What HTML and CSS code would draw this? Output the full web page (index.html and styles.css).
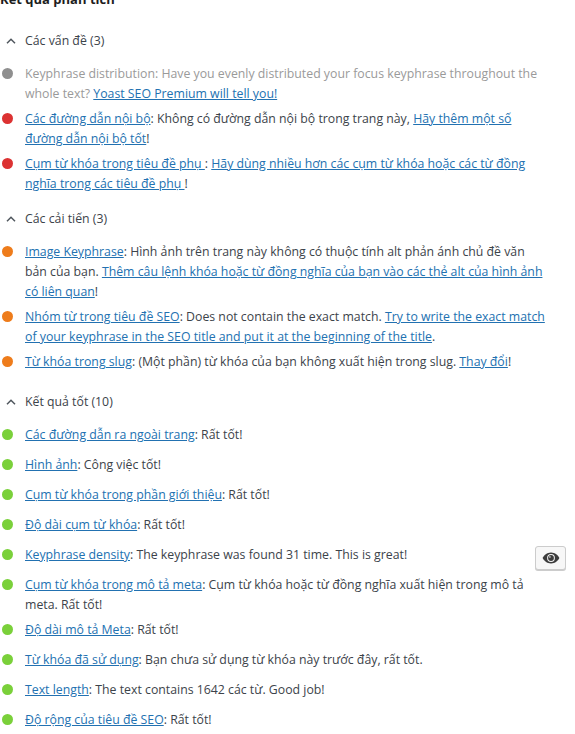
FILE: index.html
```html
<!DOCTYPE html>
<html lang="vi">
<head>
<meta charset="utf-8">
<title>Kết quả phân tích</title>
<link rel="stylesheet" href="styles.css">
</head>
<body>
<div class="panel">
  <h2 class="title">Kết quả phân tích</h2>

  <section class="group">
    <div class="group-head">
      <svg class="chev" width="10" height="6" viewBox="0 0 10 6"><polyline points="1,5.2 5,1.2 9,5.2" fill="none" stroke="#50575e" stroke-width="1.5"/></svg>
      <span>Các vấn đề (3)</span>
    </div>
    <ul class="results">
      <li class="result"><span class="bullet gray"></span><p class="text"><span class="muted">Keyphrase distribution: Have you evenly distributed your focus keyphrase throughout the whole text? </span><a href="#">Yoast SEO Premium will tell you!</a></p></li>
      <li class="result"><span class="bullet red"></span><p class="text"><a href="#">Các đường dẫn nội bộ</a>: Không có đường dẫn nội bộ trong trang này, <a href="#">Hãy thêm một số đường dẫn nội bộ tốt</a>!</p></li>
      <li class="result"><span class="bullet red"></span><p class="text"><a href="#">Cụm từ khóa trong tiêu đề phụ </a>: <a href="#">Hãy dùng nhiều hơn các cụm từ khóa hoặc các từ đồng nghĩa trong các tiêu đề phụ </a>!</p></li>
    </ul>
  </section>

  <section class="group">
    <div class="group-head">
      <svg class="chev" width="10" height="6" viewBox="0 0 10 6"><polyline points="1,5.2 5,1.2 9,5.2" fill="none" stroke="#50575e" stroke-width="1.5"/></svg>
      <span>Các cải tiến (3)</span>
    </div>
    <ul class="results">
      <li class="result"><span class="bullet orange"></span><p class="text"><a href="#">Image Keyphrase</a>: Hình ảnh trên trang này không có thuộc tính alt phản ánh chủ đề văn bản của bạn. <a href="#">Thêm câu lệnh khóa hoặc từ đồng nghĩa của bạn vào các thẻ alt của hình ảnh có liên quan</a>!</p></li>
      <li class="result"><span class="bullet orange"></span><p class="text"><a href="#">Nhóm từ trong tiêu đề SEO</a>: Does not contain the exact match. <a href="#">Try to write the exact match of your keyphrase in the SEO title and put it at the beginning of the title</a>.</p></li>
      <li class="result"><span class="bullet orange"></span><p class="text"><a href="#">Từ khóa trong slug</a>: (Một phần) từ khóa của bạn không xuất hiện trong slug. <a href="#">Thay đổi</a>!</p></li>
    </ul>
  </section>

  <section class="group">
    <div class="group-head">
      <svg class="chev" width="10" height="6" viewBox="0 0 10 6"><polyline points="1,5.2 5,1.2 9,5.2" fill="none" stroke="#50575e" stroke-width="1.5"/></svg>
      <span>Kết quả tốt (10)</span>
    </div>
    <ul class="results">
      <li class="result"><span class="bullet green"></span><p class="text"><a href="#">Các đường dẫn ra ngoài trang</a>: Rất tốt!</p></li>
      <li class="result"><span class="bullet green"></span><p class="text"><a href="#">Hình ảnh</a>: Công việc tốt!</p></li>
      <li class="result"><span class="bullet green"></span><p class="text"><a href="#">Cụm từ khóa trong phần giới thiệu</a>: Rất tốt!</p></li>
      <li class="result"><span class="bullet green"></span><p class="text"><a href="#">Độ dài cụm từ khóa</a>: Rất tốt!</p></li>
      <li class="result"><span class="bullet green"></span><p class="text"><a href="#">Keyphrase density</a>: The keyphrase was found 31 time. This is great!</p>
        <button class="eye-btn" type="button" aria-label="Highlight">
          <svg width="18" height="12" viewBox="0 0 18 12"><path d="M9 0.6C4.9 0.6 1.9 3.4 0.6 6c1.3 2.6 4.3 5.4 8.4 5.4s7.1-2.8 8.4-5.4C16.1 3.4 13.1 0.6 9 0.6z" fill="#3c3c3c"/><circle cx="9" cy="6" r="3.9" fill="#f7f7f7"/><circle cx="9" cy="6" r="2.9" fill="#3c3c3c"/><circle cx="7.9" cy="4.9" r="0.9" fill="#bbb"/></svg>
        </button>
      </li>
      <li class="result"><span class="bullet green"></span><p class="text"><a href="#">Cụm từ khóa trong mô tả meta</a>: Cụm từ khóa hoặc từ đồng nghĩa xuất hiện trong mô tả meta. Rất tốt!</p></li>
      <li class="result"><span class="bullet green"></span><p class="text"><a href="#">Độ dài mô tả Meta</a>: Rất tốt!</p></li>
      <li class="result"><span class="bullet green"></span><p class="text"><a href="#">Từ khóa đã sử dụng</a>: Bạn chưa sử dụng từ khóa này trước đây, rất tốt.</p></li>
      <li class="result"><span class="bullet green"></span><p class="text"><a href="#">Text length</a>: The text contains 1642 các từ. Good job!</p></li>
      <li class="result"><span class="bullet green"></span><p class="text"><a href="#">Độ rộng của tiêu đề SEO</a>: Rất tốt!</p></li>
    </ul>
  </section>
</div>
</body>
</html>
```

FILE: styles.css
```css
html, body {
  margin: 0;
  padding: 0;
  background: #ffffff;
}

body {
  font-family: "Open Sans", "Noto Sans", "DejaVu Sans", sans-serif;
  font-size: 12.3px;
  color: #3c434a;
  overflow: hidden;
}

.panel {
  width: 566px;
}

.title {
  margin: -11px 0 12px 0;
  font-size: 13px;
  font-weight: 700;
  line-height: 20px;
  color: #1e1e1e;
}

.group-head {
  display: flex;
  align-items: center;
  padding: 10px 0 13px 0;
  line-height: 20px;
  color: #3c434a;
}

.chev {
  flex: none;
  width: 10px;
  height: 6px;
  margin: 0 9px 0 6px;
}

.results {
  list-style: none;
  margin: 0;
  padding: 0;
}

.result {
  display: flex;
  align-items: flex-start;
  min-height: 25px;
  margin-bottom: 5px;
}

.bullet {
  flex: none;
  width: 11px;
  height: 11px;
  border-radius: 50%;
  margin: 4px 12px 0 2px;
}

.gray { background: #8f8f8f; }
.red { background: #dc3232; }
.orange { background: #ee7c1b; }
.green { background: #7ad03a; }

.text {
  flex: 1;
  margin: 0;
  padding-right: 18px;
  line-height: 20px;
}

.muted {
  color: #9a9a9a;
}

.text a {
  color: #2271b1;
  text-decoration: underline;
}

.eye-btn {
  flex: none;
  width: 31px;
  height: 24px;
  margin: 1px 0 0 0;
  padding: 0;
  display: flex;
  align-items: center;
  justify-content: center;
  background: #f7f7f7;
  border: 1px solid #cccccc;
  border-radius: 3px;
  box-shadow: 0 1px 0 #cccccc;
}
```
